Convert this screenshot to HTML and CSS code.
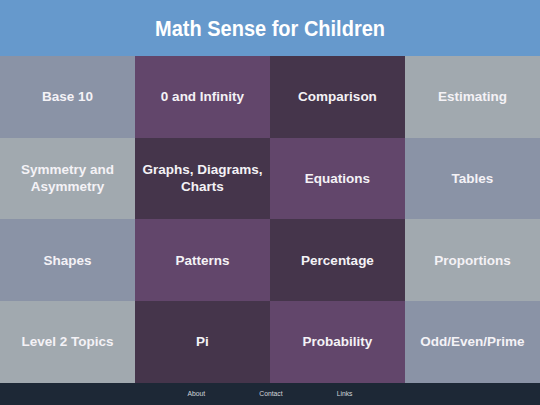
FILE: index.html
```html
<!DOCTYPE html>
<html>
<head>
<meta charset="utf-8">
<link rel="stylesheet" href="styles.css">
</head>
<body>
<div class="page">
  <header class="header"><h1 class="title">Math Sense for Children</h1></header>
  <main class="grid">
    <div class="cell c-slate">Base 10</div>
    <div class="cell c-plum">0 and Infinity</div>
    <div class="cell c-dark">Comparison</div>
    <div class="cell c-gray">Estimating</div>
    <div class="cell c-gray">Symmetry and<br>Asymmetry</div>
    <div class="cell c-dark">Graphs, Diagrams,<br>Charts</div>
    <div class="cell c-plum">Equations</div>
    <div class="cell c-slate">Tables</div>
    <div class="cell c-slate">Shapes</div>
    <div class="cell c-plum">Patterns</div>
    <div class="cell c-dark">Percentage</div>
    <div class="cell c-gray">Proportions</div>
    <div class="cell c-gray">Level 2 Topics</div>
    <div class="cell c-dark">Pi</div>
    <div class="cell c-plum">Probability</div>
    <div class="cell c-slate">Odd/Even/Prime</div>
  </main>
  <footer class="footer">
    <a class="flink">About</a>
    <a class="flink">Contact</a>
    <a class="flink">Links</a>
  </footer>
</div>
</body>
</html>
```
FILE: styles.css
```css
html, body {
  margin: 0;
  padding: 0;
}
body {
  font-family: "Liberation Sans", Arial, sans-serif;
  width: 540px;
  height: 405px;
  overflow: hidden;
}
.page {
  display: flex;
  flex-direction: column;
  height: 405px;
}
.header {
  height: 56px;
  background: #6699cc;
  display: flex;
  align-items: center;
  justify-content: center;
}
.title {
  margin: 0;
  color: #ffffff;
  font-size: 20px;
  font-weight: bold;
  transform: scaleY(1.12);
}
.grid {
  flex: 1;
  display: grid;
  grid-template-columns: repeat(4, 1fr);
  grid-template-rows: repeat(4, 1fr);
}
.cell {
  display: flex;
  align-items: center;
  justify-content: center;
  text-align: center;
  color: #f4f2f6;
  font-size: 13.5px;
  font-weight: bold;
  line-height: 17px;
}
.c-slate { background: #8a93a6; }
.c-gray { background: #a1a9af; }
.c-plum { background: #62466b; }
.c-dark { background: #45354b; }
.footer {
  height: 22.5px;
  background: #1d2836;
  display: flex;
  align-items: center;
  justify-content: center;
  gap: 54px;
}
.flink {
  color: #d0d4da;
  font-size: 6.8px;
}
```
